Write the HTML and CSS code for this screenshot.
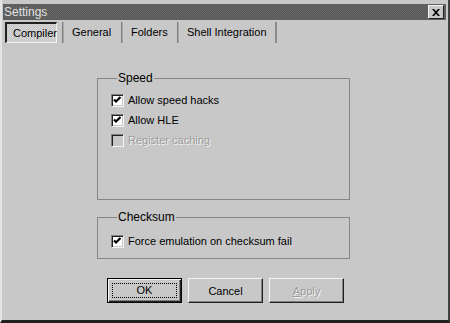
FILE: index.html
```html
<!DOCTYPE html>
<html lang="en">
<head>
    <meta charset="UTF-8">
    <title>Settings</title>
    <link rel="stylesheet" href="styles.css">
</head>
<body>
    <div class="window">
        <div class="title-bar">
            <span class="title-text">Settings</span>
            <span class="btn-close">
                <svg width="8" height="7" viewBox="0 0 8 7">
                    <path d="M0 0h2l2 2.2 2-2.2h2l-3 3.5 3 3.5h-2l-2-2.2-2 2.2h-2l3-3.5z" fill="#000"/>
                </svg>
            </span>
        </div>

        <ul class="tabs">
            <li class="tab tab-active">Compiler</li>
            <li class="tab tab-general">General</li>
            <li class="tab tab-folders">Folders</li>
            <li class="tab tab-shell">Shell Integration</li>
        </ul>

        <fieldset class="group group-speed">
            <legend>Speed</legend>
            <div class="rows">
                <label class="check-row"><span class="check checked"></span>Allow speed hacks</label>
                <label class="check-row"><span class="check checked"></span>Allow HLE</label>
                <label class="check-row disabled"><span class="check"></span>Register caching</label>
            </div>
        </fieldset>

        <fieldset class="group group-checksum">
            <legend>Checksum</legend>
            <label class="check-row"><span class="check checked"></span>Force emulation on checksum fail</label>
        </fieldset>

        <div class="buttons">
            <div class="btn btn-default"><span class="focus">OK</span></div>
            <div class="btn">Cancel</div>
            <div class="btn btn-disabled"><u>A</u>pply</div>
        </div>
    </div>
</body>
</html>
```

FILE: styles.css
```css
body{
    margin: 0;
    font-family: "Liberation Sans", Arial, sans-serif;
    font-size: 11px;
    color: #000;
}
.window{
    width: 450px;
    height: 323px;
    box-sizing: border-box;
    background-color: #c8c8c8;
    border-left: 2px solid #e4e4e4;
    border-right: 2px solid #404040;
    border-bottom: 3px solid #202020;
    padding-top: 4px;
}
.title-bar{
    display: flex;
    align-items: center;
    justify-content: space-between;
    height: 16px;
    margin: 0 2px 0 1px;
    padding-left: 1px;
    background-color: #5e5e5e;
    background-image: repeating-conic-gradient(#686868 0 25%, #565656 0 50%);
    background-size: 2px 2px;
}
.title-text{
    color: #e2e2e2;
    font-size: 12px;
    line-height: 16px;
}
.btn-close{
    display: flex;
    align-items: center;
    justify-content: center;
    width: 14px;
    height: 12px;
    margin-right: 2px;
    background-color: #c8c8c8;
    border-top: 1px solid #f4f4f4;
    border-left: 1px solid #f4f4f4;
    border-right: 1px solid #202020;
    border-bottom: 1px solid #202020;
}

/* tabs */
.tabs{
    display: flex;
    height: 21px;
    margin: 2px 0 0 3px;
    padding: 0;
    list-style: none;
}
.tab{
    box-sizing: border-box;
    height: 21px;
    line-height: 20px;
    padding-left: 9px;
    border-left: 1px solid #808080;
    box-shadow: inset 1px 0 0 #a8a8a8;
}
.tab-active{
    width: 52px;
    margin-right: 5px;
    padding-left: 6px;
    border-top: 2px solid #202020;
    border-left: 2px solid #202020;
    border-right: 1px solid #f0f0f0;
    border-bottom: 1px solid #f0f0f0;
    box-shadow: none;
    line-height: 18px;
    background-image: repeating-conic-gradient(#d8d8d8 0 25%, #c4c4c4 0 50%);
    background-size: 2px 2px;
}
.tab-general{
    width: 59px;
}
.tab-folders{
    width: 56px;
}
.tab-shell{
    width: 100px;
    border-right: 2px solid #8c8c8c;
}

/* groups */
.group{
    box-sizing: border-box;
    width: 253px;
    margin: 28px 0 0 95px;
    padding: 5px 0 0 13px;
    border: 1px solid #868686;
    min-width: 0;
}
.group legend{
    margin-left: 6px;
    padding: 0 1px;
    font-size: 12px;
    line-height: 14px;
}
.group-speed .rows{
    height: 109px;
}
.group-checksum{
    margin-top: 10px;
    padding-top: 7px;
    padding-bottom: 7px;
}
.check-row{
    display: flex;
    align-items: center;
    height: 20px;
    line-height: 20px;
}
.check{
    box-sizing: border-box;
    width: 13px;
    height: 13px;
    margin-right: 4px;
    background-color: #fff;
    border-top: 1px solid #808080;
    border-left: 1px solid #808080;
    border-right: 1px solid #f4f4f4;
    border-bottom: 1px solid #f4f4f4;
    box-shadow: inset 1px 1px 0 #202020, inset -1px -1px 0 #c8c8c8;
}
.check.checked{
    background-image: url("data:image/svg+xml,%3Csvg xmlns='http://www.w3.org/2000/svg' width='11' height='11'%3E%3Cpath d='M2 4.5l2 2 4.5-4.5' stroke='%23000' stroke-width='2.2' fill='none'/%3E%3C/svg%3E");
    background-position: 0 0;
    background-repeat: no-repeat;
}
.disabled{
    color: #9c9c9c;
    text-shadow: 1px 1px 0 #f4f4f4;
}
.disabled .check{
    background-color: #c8c8c8;
}

/* buttons */
.buttons{
    display: flex;
    gap: 6px;
    margin: 19px 0 0 105px;
}
.btn{
    box-sizing: border-box;
    width: 75px;
    height: 25px;
    display: flex;
    align-items: center;
    justify-content: center;
    border-top: 1px solid #f4f4f4;
    border-left: 1px solid #f4f4f4;
    border-right: 1px solid #202020;
    border-bottom: 1px solid #202020;
    box-shadow: inset -1px -1px 0 #808080;
}
.btn-default{
    border: 1px solid #000;
    box-shadow: inset 1px 1px 0 #f4f4f4, inset -1px -1px 0 #202020, inset -2px -2px 0 #808080;
}
.btn-default .focus{
    box-sizing: border-box;
    width: 65px;
    height: 15px;
    line-height: 13px;
    text-align: center;
    border: 1px dotted #000;
}
.btn-disabled{
    color: #9c9c9c;
    text-shadow: 1px 1px 0 #f4f4f4;
}
```
